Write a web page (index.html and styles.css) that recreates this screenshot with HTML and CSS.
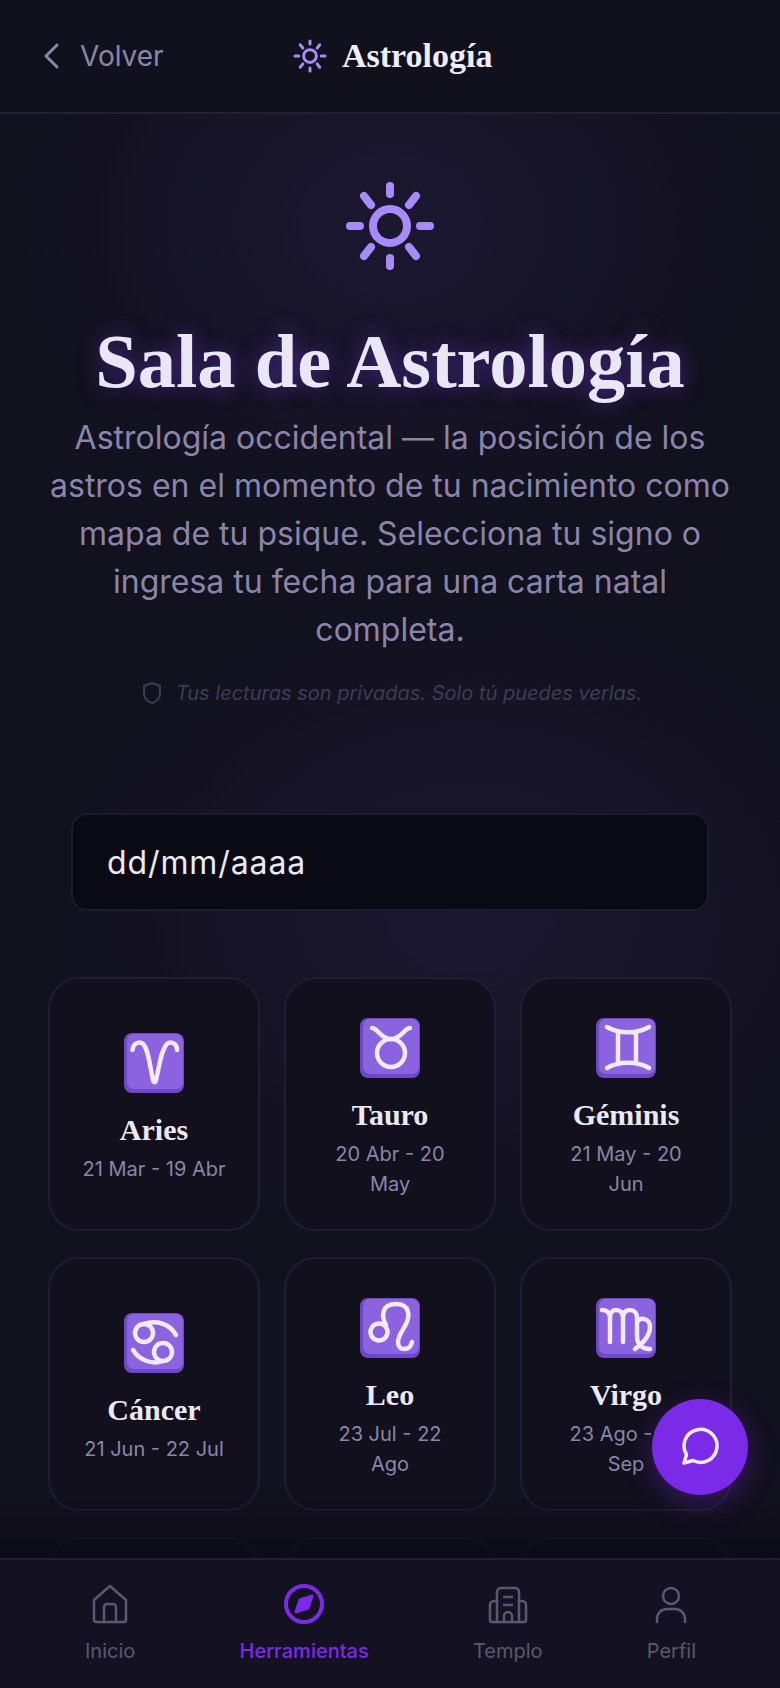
FILE: index.html
```html
<!DOCTYPE html>
<html lang="es">
<head>
    <meta charset="UTF-8">
    <meta name="viewport" content="width=device-width, initial-scale=1.0">
    <title>Astrología</title>
    <link rel="stylesheet" href="styles.css">
</head>
<body>
    <div class="app">
        <header class="topbar">
            <a class="back">
                <svg class="back-icon" viewBox="0 0 24 32"><path d="M17 5L6 16l11 11"/></svg>
                <span>Volver</span>
            </a>
            <div class="topbar-title">
                <svg class="sun sun-small" viewBox="0 0 96 96"><use href="#sun"/></svg>
                <span>Astrología</span>
            </div>
        </header>

        <main class="content">
            <section class="hero">
                <svg class="sun sun-big" viewBox="0 0 96 96">
                    <g id="sun">
                        <circle cx="48" cy="48" r="17"/>
                        <path d="M48 8v8M48 80v8M8 48h10M78 48h10M22 18l7 9M74 18l-7 9M22 78l7-9M74 78l-7-9"/>
                    </g>
                </svg>
                <h1>Sala de Astrología</h1>
                <p class="intro">Astrología occidental — la posición de los astros en el momento de tu nacimiento como mapa de tu psique. Selecciona tu signo o ingresa tu fecha para una carta natal completa.</p>
                <p class="privacy">
                    <svg class="shield" viewBox="0 0 20 24"><path d="M10 2l8 3v7c0 5-3 8.500-8 10-5-1.500-8-5-8-10V5z"/></svg>
                    <span>Tus lecturas son privadas. Solo tú puedes verlas.</span>
                </p>
            </section>

            <div class="date-wrap">
                <input class="date-input" type="text" value="dd/mm/aaaa">
            </div>

            <div class="signs">
                <div class="sign">
                    <svg class="glyph" viewBox="0 0 60 60"><rect class="tile-back" width="60" height="60" rx="8"/><rect class="tile" x="3" y="1" width="56" height="55" rx="7"/><path d="M8.500 17C9 11 13 9.500 16 9.500 24 9.500 26 35 29 47c.5 3 2.500 3 3 0 3-12 6-37.500 14-37.500 3 0 7 1.500 7 7.500"/></svg>
                    <div class="sign-name">Aries</div>
                    <div class="sign-dates">21 Mar - 19 Abr</div>
                </div>
                <div class="sign">
                    <svg class="glyph" viewBox="0 0 60 60"><rect class="tile-back" width="60" height="60" rx="8"/><rect class="tile" x="3" y="1" width="56" height="55" rx="7"/><path d="M12 10c6 0 8 11 19 11s13-11 19-11"/><circle cx="31" cy="35" r="14"/></svg>
                    <div class="sign-name">Tauro</div>
                    <div class="sign-dates">20 Abr - 20 May</div>
                </div>
                <div class="sign">
                    <svg class="glyph" viewBox="0 0 60 60"><rect class="tile-back" width="60" height="60" rx="8"/><rect class="tile" x="3" y="1" width="56" height="55" rx="7"/><path d="M11 9c12 7 30 7 42 0M11 50c12-7 30-7 42 0M22 14v30M40 14v30"/></svg>
                    <div class="sign-name">Géminis</div>
                    <div class="sign-dates">21 May - 20 Jun</div>
                </div>
                <div class="sign">
                    <svg class="glyph" viewBox="0 0 60 60"><rect class="tile-back" width="60" height="60" rx="8"/><rect class="tile" x="3" y="1" width="56" height="55" rx="7"/><circle cx="20" cy="20" r="9"/><circle cx="39" cy="39" r="9"/><path d="M20 11c12-4 25-1 32 11M9 37c6 10 19 15 30 11"/></svg>
                    <div class="sign-name">Cáncer</div>
                    <div class="sign-dates">21 Jun - 22 Jul</div>
                </div>
                <div class="sign">
                    <svg class="glyph" viewBox="0 0 60 60"><rect class="tile-back" width="60" height="60" rx="8"/><rect class="tile" x="3" y="1" width="56" height="55" rx="7"/><circle cx="19" cy="34" r="8.500"/><path d="M26 27C22 20 20 6 36 6c14 0 14 12 10 20-3 6-8 12-8 18 0 5 3 7 6 7 4 0 7-2 8-7"/></svg>
                    <div class="sign-name">Leo</div>
                    <div class="sign-dates">23 Jul - 22 Ago</div>
                </div>
                <div class="sign">
                    <svg class="glyph" viewBox="0 0 60 60"><rect class="tile-back" width="60" height="60" rx="8"/><rect class="tile" x="3" y="1" width="56" height="55" rx="7"/><path d="M6 12c4 0 8 2 8 8v24M14 20c0-6 3-8 6-8 4 0 7 3 7 8v24M27 20c0-6 3-8 7-8s7 3 7 8v18c0 6 3 13 13 13M41 24c4-6 13-3 13 5 0 9-8 17-15 22"/></svg>
                    <div class="sign-name">Virgo</div>
                    <div class="sign-dates">23 Ago - 22 Sep</div>
                </div>
                <div class="sign"></div>
                <div class="sign"></div>
                <div class="sign"></div>
            </div>
            <div class="fade"></div>
        </main>

        <button class="chat-button">
            <svg viewBox="0 0 40 40"><path d="M4 36l2.500-8.500A16.500 16.500 0 1 1 13 33.500z"/></svg>
        </button>

        <nav class="bottom-nav">
            <a class="nav-item">
                <svg viewBox="0 0 40 40"><path d="M4 16L20 2l16 14v20a2 2 0 0 1-2 2H6a2 2 0 0 1-2-2z"/><path d="M14 38V23a3 3 0 0 1 3-3h6a3 3 0 0 1 3 3v15"/></svg>
                <span>Inicio</span>
            </a>
            <a class="nav-item active">
                <svg viewBox="0 0 40 40"><circle cx="20" cy="20" r="18"/><path class="needle" d="M28 12l-4 12-12 4 4-12z"/></svg>
                <span>Herramientas</span>
            </a>
            <a class="nav-item">
                <svg viewBox="0 0 40 40"><path d="M9 38V8a4 4 0 0 1 4-4h14a4 4 0 0 1 4 4v30"/><path d="M9 17H6a4 4 0 0 0-4 4v15a2 2 0 0 0 2 2h32a2 2 0 0 0 2-2V21a4 4 0 0 0-4-4h-3"/><path d="M16 13h8M16 21h8M16 38v-6a4 4 0 0 1 8 0v6"/></svg>
                <span>Templo</span>
            </a>
            <a class="nav-item">
                <svg viewBox="0 0 40 40"><circle cx="20" cy="12" r="8"/><path d="M6 38v-3a10 10 0 0 1 10-10h8a10 10 0 0 1 10 10v3"/></svg>
                <span>Perfil</span>
            </a>
        </nav>
    </div>
</body>
</html>
```

FILE: styles.css
```css
* {
    box-sizing: border-box;
}
body {
    margin: 0;
    background-color: #12111f;
    font-family: Inter, "Noto Sans", sans-serif;
}
.app {
    position: relative;
    display: flex;
    flex-direction: column;
    width: 780px;
    height: 1688px;
    overflow: hidden;
}

/* top bar */
.topbar {
    display: flex;
    align-items: center;
    flex-shrink: 0;
    height: 114px;
    padding-left: 40px;
    background-color: #11111e;
    border-bottom: 2px solid #221f35;
}
.back {
    display: flex;
    align-items: center;
    gap: 16px;
    width: 252px;
    color: #8a85ab;
    font-size: 28px;
}
.back-icon {
    width: 24px;
    height: 32px;
    fill: none;
    stroke: #8a85ab;
    stroke-width: 3;
    stroke-linecap: round;
    stroke-linejoin: round;
}
.topbar-title {
    display: flex;
    align-items: center;
    gap: 14px;
    color: #f0edfa;
    font-family: "Liberation Serif", serif;
    font-size: 34px;
    font-weight: bold;
}
.sun {
    fill: none;
    stroke: #a78bfa;
    stroke-linecap: round;
}
.sun-small {
    width: 36px;
    height: 36px;
    stroke-width: 8;
}
.sun-big {
    display: block;
    width: 96px;
    height: 96px;
    margin: 0 auto;
    stroke-width: 8;
}

/* hero */
.content {
    position: relative;
    flex: 1;
    overflow: hidden;
    background:
        radial-gradient(ellipse 380px 300px at 50% 110px, #1b1731 0%, rgba(27, 23, 49, 0) 100%),
        radial-gradient(ellipse 420px 320px at 60% 800px, #1b1730 0%, rgba(27, 23, 48, 0) 100%),
        #12111e;
}
.hero {
    padding: 64px 48px 0;
    text-align: center;
}
h1 {
    margin: 48px 0 12px;
    color: #e9e6f5;
    font-family: "Liberation Serif", serif;
    font-size: 76.500px;
    font-weight: bold;
    line-height: 80px;
    text-shadow: 0 0 20px rgba(124, 58, 237, 0.5);
}
.intro {
    margin: 0;
    color: #8a85ab;
    font-size: 32px;
    line-height: 48px;
}
.privacy {
    display: flex;
    justify-content: center;
    align-items: center;
    gap: 14px;
    margin: 24px 0 0;
    padding-left: 4px;
    color: #3f3b55;
    font-size: 20px;
    font-style: italic;
    line-height: 30px;
}
.shield {
    width: 20px;
    height: 24px;
    fill: none;
    stroke: #3f3b55;
    stroke-width: 2;
    stroke-linejoin: round;
}

/* date field */
.date-wrap {
    margin-top: 105px;
    padding: 0 71px;
}
.date-input {
    display: block;
    width: 100%;
    height: 98px;
    padding: 0 34px;
    background-color: #0a0a14;
    border: 2px solid #1d1a30;
    border-radius: 16px;
    color: #ece9f7;
    font-family: Inter, sans-serif;
    font-size: 32px;
    letter-spacing: 0.9px;
    outline: none;
}

/* zodiac grid */
.signs {
    display: grid;
    grid-template-columns: repeat(3, 1fr);
    gap: 26px 24px;
    margin-top: 66px;
    padding: 0 48px;
}
.sign {
    display: flex;
    flex-direction: column;
    align-items: center;
    justify-content: center;
    min-height: 254px;
    padding: 34px 32px 26px;
    background-color: #11101c;
    border: 2px solid #1f1c33;
    border-radius: 32px;
    text-align: center;
}
.glyph {
    width: 60px;
    height: 60px;
    margin-bottom: 13px;
    fill: none;
    stroke: #efeafc;
    stroke-width: 4.500;
    stroke-linecap: round;
    stroke-linejoin: round;
}
.tile-back {
    fill: #6d4ac4;
    stroke: none;
}
.tile {
    fill: #8b63e0;
    stroke: none;
}
.sign-name {
    color: #ece9f7;
    font-family: "Liberation Serif", serif;
    font-size: 30px;
    font-weight: bold;
    line-height: 48px;
}
.sign-dates {
    color: #8a85ab;
    font-size: 20px;
    line-height: 30px;
}
.fade {
    position: absolute;
    left: 0;
    right: 0;
    bottom: 0;
    height: 64px;
    background: linear-gradient(to bottom, rgba(10, 10, 20, 0), rgba(10, 10, 20, 0.8));
}

/* floating chat */
.chat-button {
    position: absolute;
    right: 32px;
    bottom: 193px;
    display: flex;
    align-items: center;
    justify-content: center;
    width: 96px;
    height: 96px;
    padding: 0;
    background-color: #7b2be8;
    border: none;
    border-radius: 50%;
    box-shadow: 0 8px 28px rgba(124, 43, 232, 0.35);
}
.chat-button svg {
    width: 40px;
    height: 40px;
    fill: none;
    stroke: #f0edfa;
    stroke-width: 3.500;
    stroke-linejoin: round;
}

/* bottom nav */
.bottom-nav {
    display: flex;
    justify-content: space-between;
    flex-shrink: 0;
    height: 130px;
    padding: 24px 84px 0 85px;
    background-color: #141222;
    border-top: 2px solid #221f35;
}
.nav-item {
    display: flex;
    flex-direction: column;
    align-items: center;
    color: #5b5772;
    font-size: 20px;
    line-height: 30px;
}
.nav-item svg {
    width: 40px;
    height: 40px;
    margin-bottom: 12px;
    fill: none;
    stroke: currentColor;
    stroke-width: 2.500;
    stroke-linecap: round;
    stroke-linejoin: round;
}
.nav-item.active {
    color: #7b2be8;
    font-weight: 500;
}
.nav-item.active svg {
    stroke-width: 4;
}
.nav-item.active .needle {
    fill: currentColor;
    stroke-width: 3;
}
```
